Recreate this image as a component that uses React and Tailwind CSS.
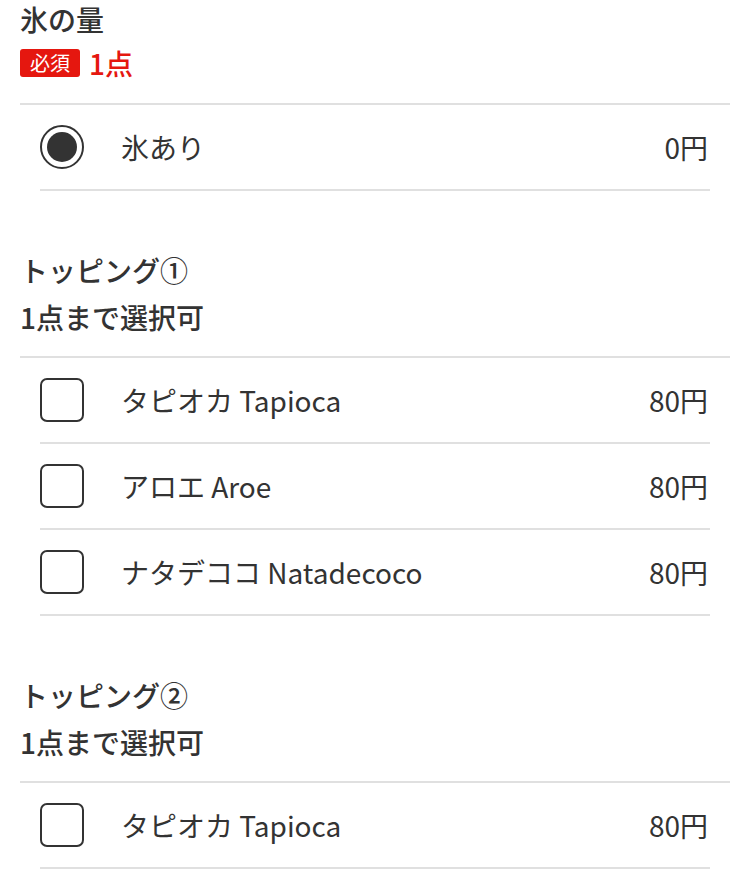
import { useState } from 'react';

const font = { fontFamily: '"Noto Sans CJK JP", "Noto Sans", sans-serif' };

const sections = [
  {
    title: '氷の量',
    required: true,
    note: '1点',
    type: 'radio',
    items: [{ name: '氷あり', price: '0円' }],
  },
  {
    title: 'トッピング①',
    note: '1点まで選択可',
    type: 'check',
    items: [
      { name: 'タピオカ Tapioca', price: '80円' },
      { name: 'アロエ Aroe', price: '80円' },
      { name: 'ナタデココ Natadecoco', price: '80円' },
    ],
  },
  {
    title: 'トッピング②',
    note: '1点まで選択可',
    type: 'check',
    items: [{ name: 'タピオカ Tapioca', price: '80円' }],
  },
];

function Radio({ checked }) {
  return (
    <span className="flex h-[44px] w-[44px] items-center justify-center rounded-full border-2 border-[#333]">
      {checked && <span className="h-[30px] w-[30px] rounded-full bg-[#333]" />}
    </span>
  );
}

function Check({ checked }) {
  return (
    <span className="flex h-[44px] w-[44px] items-center justify-center rounded-[7px] border-2 border-[#333]">
      {checked && <span className="text-[#333]">✓</span>}
    </span>
  );
}

export default function App() {
  const [picked, setPicked] = useState({ '0-0': true });

  const toggle = (key) => setPicked((p) => ({ ...p, [key]: !p[key] }));

  return (
    <div className="bg-white px-5 pb-10 text-[#333]" style={font}>
      {sections.map((sec, si) => (
        <section key={si} className={si === 0 ? 'pt-[2px]' : 'mt-[62px]'}>
          <h2 className="text-[28px] font-medium leading-[34px]">{sec.title}</h2>
          {sec.required ? (
            <div className="mt-[12px] mb-[25px] flex h-[30px] items-center gap-[9px]">
              <span className="rounded-[3px] bg-[#e5170f] px-[10px] text-[20px] leading-[28px] text-white">必須</span>
              <span className="text-[28px] font-medium leading-[30px] text-[#e5170f]">{sec.note}</span>
            </div>
          ) : (
            <p className="mt-[13px] mb-[22px] text-[28px] font-medium leading-[34px]">{sec.note}</p>
          )}
          <ul className="border-t-2 border-[#e0e0e0]">
            {sec.items.map((item, ii) => {
              const key = `${si}-${ii}`;
              return (
                <li
                  key={ii}
                  onClick={() => toggle(key)}
                  className="mx-5 flex h-[86px] cursor-pointer items-center border-b-2 border-[#e0e0e0]"
                >
                  {sec.type === 'radio' ? <Radio checked={picked[key]} /> : <Check checked={picked[key]} />}
                  <span className="ml-[37px] flex-1 text-[28px] leading-none">{item.name}</span>
                  <span className="mr-[2px] text-[28px] leading-none">{item.price}</span>
                </li>
              );
            })}
          </ul>
        </section>
      ))}
    </div>
  );
}
